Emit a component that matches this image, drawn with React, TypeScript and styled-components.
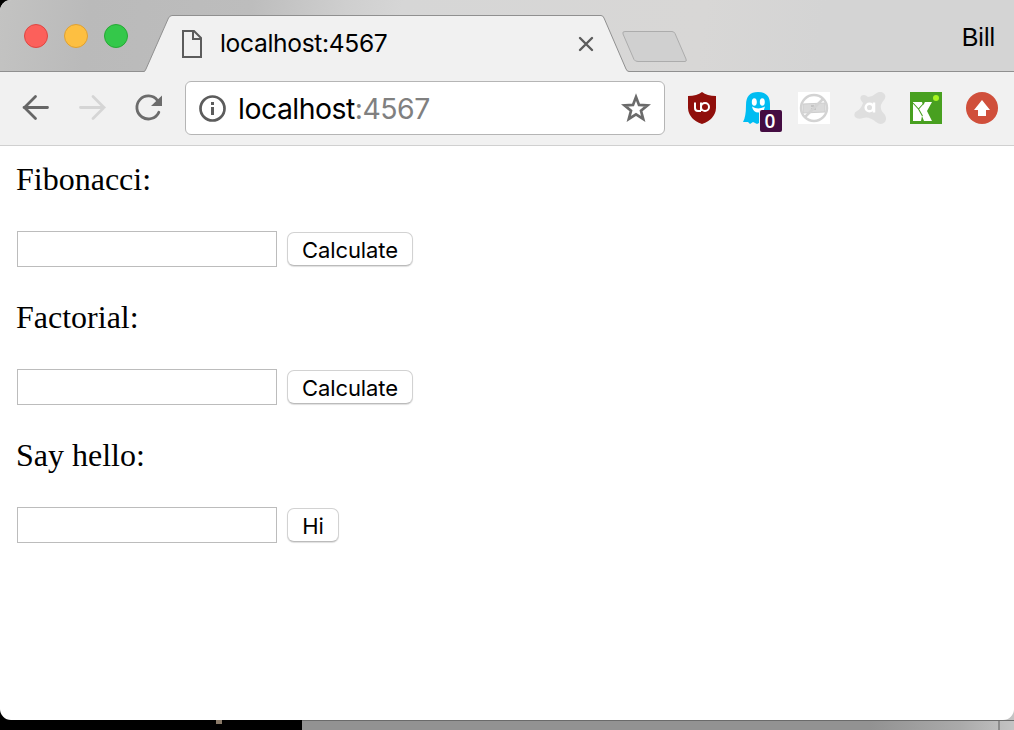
import React from 'react';
import styled, { createGlobalStyle } from 'styled-components';

const Global = createGlobalStyle`
  * { box-sizing: border-box; }
  body { margin: 0; background: #000; overflow: hidden; }
  svg { display: block; flex: none; }
`;

const Desktop = styled.div`
  width: 1014px;
  height: 730px;
  display: flex;
  flex-direction: column;
  background: linear-gradient(#000, #000) 0 0 / 302px 100% no-repeat,
    linear-gradient(90deg, #929292 870px, #aaa 960px, #c4c4c4 1014px);
`;

const BrowserWindow = styled.div`
  height: 720px;
  display: flex;
  flex-direction: column;
  background: #fff;
  border-radius: 11px 0 11px 11px;
  overflow: hidden;
`;

const Sliver = styled.div`
  height: 10px;
  display: flex;
  border-top: 1px solid #6a6a6a;
  border-image: linear-gradient(90deg, #000 302px, #6a6a6a 302px) 1;
`;

const Speck = styled.div`
  width: 6px;
  height: 4px;
  margin-left: 216px;
  margin-top: -1px;
  background: #8a7a68;
`;

const Seam = styled.div`
  width: 2px;
  margin-left: 776px;
  background: #8c8c8c;
`;

const TitleBar = styled.header`
  height: 72px;
  flex: none;
  display: flex;
  border-bottom: 1px solid #909090;
  background: linear-gradient(97deg, #c3c3c2 0, #bababa 90px, #bdbdbd 250px, #cfcfcf 345px, #d6d6d6 400px, #d8d7d6 700px, #d4d4d4 820px);
`;

const Lights = styled.div`
  width: 144px;
  display: flex;
  gap: 16px;
  padding: 24px 0 0 24px;
`;

const Light = styled.span<{ $fill: string; $edge: string }>`
  width: 24px;
  height: 24px;
  border-radius: 50%;
  background: ${p => p.$fill};
  border: 1px solid ${p => p.$edge};
`;

const Tab = styled.div`
  width: 485px;
  height: 58px;
  margin-top: 14px;
  flex: none;
  display: flex;
  position: relative;
  padding-left: 38px;
`;

const TabShape = styled.svg`
  position: absolute;
  left: 0;
  top: 0;
`;

const TabContent = styled.div`
  position: relative;
  display: flex;
  align-items: center;
  height: 60px;
  width: 412px;
`;

const TabTitle = styled.span`
  font: 24.6px/30px Inter, sans-serif;
  letter-spacing: -0.34px;
  margin: 0 0 2px 18px;
  flex: 1;
  color: #000;
`;

const NewTab = styled.svg`
  margin: 29px 0 0 -9px;
`;

const Profile = styled.span`
  margin: 22px 19px 0 auto;
  font: 25px/30px "Liberation Sans", Arial, sans-serif;
  color: #000;
`;

const Toolbar = styled.nav`
  height: 74px;
  flex: none;
  display: flex;
  align-items: center;
  padding: 0 16px 2px 20px;
  background: #f1f1f1;
  border-bottom: 1px solid #d0d0d0;
`;

const NavButtons = styled.div`
  display: flex;
  gap: 24px;
  margin-right: 21px;
`;

const AddressBar = styled.div`
  width: 480px;
  height: 54px;
  display: flex;
  align-items: center;
  padding: 0 12px 0 10px;
  background: #fff;
  border: 1px solid #b5b5b5;
  border-radius: 6px;
`;

const Address = styled.span`
  flex: 1;
  margin: 2px 0 0 10px;
  font: 28.4px/34px Inter, sans-serif;
  letter-spacing: -0.5px;
  color: #000;
  span { color: #808080; }
`;

const Extensions = styled.div`
  display: flex;
  gap: 24px;
  margin-left: auto;
`;

const Extension = styled.div`
  position: relative;
  width: 32px;
  height: 32px;
`;

const Badge = styled.span`
  position: absolute;
  left: 18px;
  top: 18px;
  width: 22px;
  height: 22px;
  border-radius: 2px;
  background: #440c42;
  color: #fff;
  font: 600 19px/23px "Open Sans", sans-serif;
  padding-right: 2px;
  text-align: center;
`;

const Page = styled.main`
  display: flex;
  flex-direction: column;
  gap: 32px;
  padding: 15px 16px 0;
`;

const Form = styled.section`
  display: flex;
  flex-direction: column;
  gap: 34px;
`;

const Label = styled.div`
  font: 32px/36px "Liberation Serif", "Times New Roman", serif;
  color: #000;
`;

const Field = styled.div`
  display: flex;
  gap: 10px;
  height: 36px;
  padding-left: 1px;
`;

const Input = styled.input`
  width: 260px;
  height: 36px;
  border: 1px solid #bcbcbc;
  border-radius: 0;
  background: #fff;
  outline: none;
`;

const Button = styled.button<{ $width: number; $spacing: number }>`
  width: ${p => p.$width}px;
  height: 34px;
  margin-top: 1px;
  padding: 1px 0 0;
  border: 1px solid #d2d2d2;
  border-bottom-color: #bbb;
  border-radius: 7px;
  background: #fff;
  box-shadow: 0 1px 1px rgba(0, 0, 0, 0.13);
  font: 22px/30px Inter, sans-serif;
  letter-spacing: ${p => p.$spacing}px;
  color: #000;
`;

const forms = [
  { label: 'Fibonacci:', action: 'Calculate', width: 126, spacing: -0.1 },
  { label: 'Factorial:', action: 'Calculate', width: 126, spacing: -0.1 },
  { label: 'Say hello:', action: 'Hi', width: 52, spacing: 0 },
];

const Arrow = ({ color, forward }: { color: string; forward?: boolean }) => (
  <svg width="32" height="32" viewBox="0 0 32 32" fill="none" stroke={color} strokeWidth="2.8" strokeLinecap="round">
    <path d={forward ? 'M4.5 15.5H28M17 4.5L28 15.5L17 26.5' : 'M27.5 15.5H4M15.5 4.5L4.5 15.5L15.5 26.5'} />
  </svg>
);

const Reload = () => (
  <svg width="32" height="32" viewBox="0 0 32 32">
    <path d="M25.4 8.3A11.5 11.5 0 1 0 26.8 20.3" fill="none" stroke="#6c6c6c" strokeWidth="2.8" strokeLinecap="round" />
    <path d="M30 3.5V14H19Z" fill="#6c6c6c" />
  </svg>
);

const FileIcon = () => (
  <svg width="20" height="28" viewBox="0 0 20 28" fill="none" stroke="#5c5c5c" strokeWidth="2">
    <path d="M1 1H12L19 8V27H1Z" />
    <path d="M11 1V9H19" />
  </svg>
);

const CloseIcon = () => (
  <svg width="16" height="16" viewBox="0 0 16 16" stroke="#5c5c5c" strokeWidth="2.4" strokeLinecap="round">
    <path d="M2 2L14 14M14 2L2 14" />
  </svg>
);

const Info = () => (
  <svg width="32" height="32" viewBox="0 0 32 32">
    <circle cx="16.5" cy="16.5" r="12" fill="none" stroke="#5c5c5c" strokeWidth="2.7" />
    <path d="M15 10h3v3h-3zM15 15h3v8h-3z" fill="#5c5c5c" />
  </svg>
);

const Star = () => (
  <svg width="32" height="32" viewBox="0 0 32 32" fill="none" stroke="#6b6b6b" strokeWidth="2.7">
    <path d="M16 5L19 12.9L27.5 13.4L21 18.8L23.2 27L16 22.4L8.8 27L11 18.8L4.5 13.4L13 12.9Z" />
  </svg>
);

const Shield = () => (
  <svg width="32" height="32" viewBox="0 0 32 32">
    <path d="M16 0Q21 3.8 30 4V16Q29.5 27 16 32Q2.5 27 2 16V4Q11 3.8 16 0Z" fill="#900f0b" />
    <g fill="none" stroke="#fff" strokeWidth="2">
      <path d="M9 10.500V16Q9 19 12 19H15" />
      <path d="M15 10.500V19" />
      <circle cx="19" cy="15" r="4" />
    </g>
  </svg>
);

const Ghost = () => (
  <svg width="32" height="32" viewBox="0 0 32 32">
    <path d="M4 13C4 4 8 0 16 0S28 4 28 12V32H22L19 30L15 32L11 30L8 32L6 30L1 30Q4 25 4 13Z" fill="#00bdf2" />
    <ellipse cx="12.3" cy="10" rx="2.5" ry="3.8" fill="#fff" />
    <ellipse cx="20.3" cy="10" rx="2.5" ry="3.8" fill="#fff" />
    <path d="M10 14.5Q16 18.500 23 14.5Q22 20.5 16.5 20.5T10 14.5Z" fill="#fff" />
    <path d="M17 32V19.5Q17 18 18 18H32V32Z" fill="#f1f1f1" />
  </svg>
);

const Blocked = () => (
  <svg width="32" height="32" viewBox="0 0 32 32">
    <path d="M0 0H32V32H0Z" fill="#fff" />
    <path d="M5 12L27 11V20L5 21Z" fill="#dadada" stroke="#cecece" />
    <path d="M13 14h3M17 13.5h2M13 17h2M16 17h2" stroke="#bcbcbc" strokeWidth="1.5" />
    <circle cx="16" cy="16" r="13" fill="none" stroke="#d3d3d3" strokeWidth="2.5" />
    <path d="M7 25L25 7" stroke="#d3d3d3" strokeWidth="2.5" />
  </svg>
);

const Avast = () => (
  <svg width="32" height="32" viewBox="0 0 32 32">
    <path d="M6.5 7Q6 3 10 3Q12 3 14 5Q18 5 22 1.5Q27-2 30.5 2Q33 6 28.5 10Q25 15 28.5 20Q34 25 31 30Q27 34 22 30Q15 24 9 26Q4 28 1 25Q-1 21 3 19Q7 17 9 11Q7 9 6.5 7Z" fill="#dfdfdf" />
    <circle cx="15.5" cy="15.500" r="3.800" fill="none" stroke="#fff" strokeWidth="2.500" />
    <path d="M20 10.500V20.500" stroke="#fff" strokeWidth="2.500" />
  </svg>
);

const GreenK = () => (
  <svg width="32" height="32" viewBox="0 0 32 32">
    <path d="M0 0H32V32H0Z" fill="#48a020" />
    <path d="M3 10H12L13 13L15 10H22L17 19L22 29H14L12 24L11 29H3Z" fill="#fff" />
    <path d="M3 11L8.500 17L14 11M8.500 17L12.500 24" fill="none" stroke="#48a020" strokeWidth="1.1" />
    <circle cx="26" cy="6" r="3" fill="#a8f520" />
  </svg>
);

const UpArrow = () => (
  <svg width="32" height="32" viewBox="0 0 32 32">
    <circle cx="16" cy="16" r="16" fill="#d04f3b" />
    <path d="M16 8L24 18H20V24H12V18H8Z" fill="#fff" />
  </svg>
);

export default function App() {
  return (
    <Desktop>
      <Global />
      <BrowserWindow>
        <TitleBar>
          <Lights>
            <Light $fill="#fc605b" $edge="#de4642" />
            <Light $fill="#fdbf41" $edge="#dea033" />
            <Light $fill="#34c84a" $edge="#26a934" />
          </Lights>
          <Tab>
            <TabShape width="485" height="58" viewBox="0 0 485 58">
              <path d="M0 57.5Q1 57.5 2 55L24.5 4Q26 1.5 28 1.5H457Q459 1.5 460 4L482 55Q483 57.5 485 57.5V58H0Z" fill="#f1f1f1" />
              <path d="M0 57.5Q1 57.5 2 55L24.5 4Q26 1.5 28 1.5H457Q459 1.5 460 4L482 55Q483 57.5 485 57.5" fill="none" stroke="#909090" />
              <path d="M2.5 57.5H482.5" stroke="#f1f1f1" />
            </TabShape>
            <TabContent>
              <FileIcon />
              <TabTitle>localhost:4567</TabTitle>
              <CloseIcon />
            </TabContent>
          </Tab>
          <NewTab width="70" height="36" viewBox="0 0 70 36">
            <path d="M5 2.5H52Q54 2.5 55 4.5L66 30Q67 32.5 65 32.5H18Q15 32.5 14 30.5L3 5Q2 2.5 5 2.5Z" fill="#d0d0d0" stroke="#acacac" />
          </NewTab>
          <Profile>Bill</Profile>
        </TitleBar>
        <Toolbar>
          <NavButtons>
            <Arrow color="#666" />
            <Arrow color="#d5d5d5" forward />
            <Reload />
          </NavButtons>
          <AddressBar>
            <Info />
            <Address>localhost<span>:4567</span></Address>
            <Star />
          </AddressBar>
          <Extensions>
            <Extension><Shield /></Extension>
            <Extension><Ghost /><Badge>0</Badge></Extension>
            <Extension><Blocked /></Extension>
            <Extension><Avast /></Extension>
            <Extension><GreenK /></Extension>
            <Extension><UpArrow /></Extension>
          </Extensions>
        </Toolbar>
        <Page>
          {forms.map(f => (
            <Form key={f.label}>
              <Label>{f.label}</Label>
              <Field>
                <Input aria-label={f.label} />
                <Button $width={f.width} $spacing={f.spacing}>{f.action}</Button>
              </Field>
            </Form>
          ))}
        </Page>
      </BrowserWindow>
      <Sliver>
        <Speck />
        <Seam />
      </Sliver>
    </Desktop>
  );
}
